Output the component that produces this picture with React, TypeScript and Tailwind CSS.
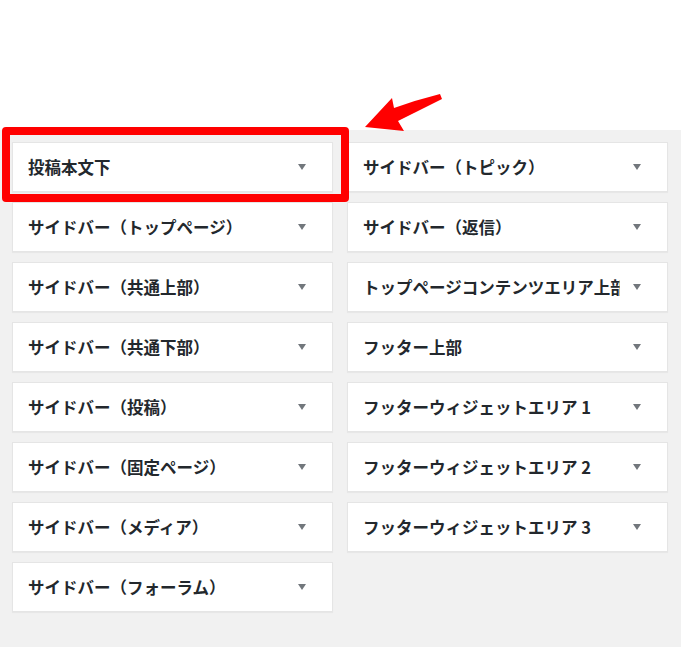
import React from "react";

const left = [
  "投稿本文下",
  "サイドバー（トップページ）",
  "サイドバー（共通上部）",
  "サイドバー（共通下部）",
  "サイドバー（投稿）",
  "サイドバー（固定ページ）",
  "サイドバー（メディア）",
  "サイドバー（フォーラム）",
];

const right = [
  "サイドバー（トピック）",
  "サイドバー（返信）",
  "トップページコンテンツエリア上部",
  "フッター上部",
  "フッターウィジェットエリア 1",
  "フッターウィジェットエリア 2",
  "フッターウィジェットエリア 3",
];

function Card({ title }: { title: string }) {
  return (
    <div className="h-[50px] bg-white border border-[#e5e5e5] shadow-[0_1px_1px_rgba(0,0,0,0.04)] flex items-center pl-[15px] pr-[26px]">
      <div className="flex-1 overflow-hidden whitespace-nowrap text-[16.5px] font-bold text-[#23282d] leading-[26px]">
        {title}
      </div>
      <svg width="8" height="6" viewBox="0 0 8 6" className="ml-[13px] shrink-0">
        <polygon points="0,0 8,0 4,6" fill="#72777c" />
      </svg>
    </div>
  );
}

export default function App() {
  return (
    <div
      className="relative w-[681px] h-[647px] overflow-hidden bg-white"
      style={{ fontFamily: '"Noto Sans CJK JP", "Noto Sans", sans-serif' }}
    >
      <div className="h-[130px] bg-white" />
      <div className="h-[517px] bg-[#f1f1f1] pt-[12px] pl-[12px] flex gap-[14px] items-start">
        <div className="w-[321px] flex flex-col gap-[10px]">
          {left.map((t) => (
            <Card key={t} title={t} />
          ))}
        </div>
        <div className="w-[321px] flex flex-col gap-[10px]">
          {right.map((t) => (
            <Card key={t} title={t} />
          ))}
        </div>
      </div>
      <div className="absolute left-[2px] top-[127px] w-[347px] h-[75px] border-[8px] border-[#ff0000] rounded-[4px] pointer-events-none" />
      <svg
        className="absolute left-0 top-0 pointer-events-none"
        width="681"
        height="647"
        viewBox="0 0 681 647"
      >
        <path
          d="M365,127 L392,98 L394,108 Q416,100 440,94 L442,99 Q420,110 398,121 L404,131 Z"
          fill="#ff0000"
        />
      </svg>
    </div>
  );
}
